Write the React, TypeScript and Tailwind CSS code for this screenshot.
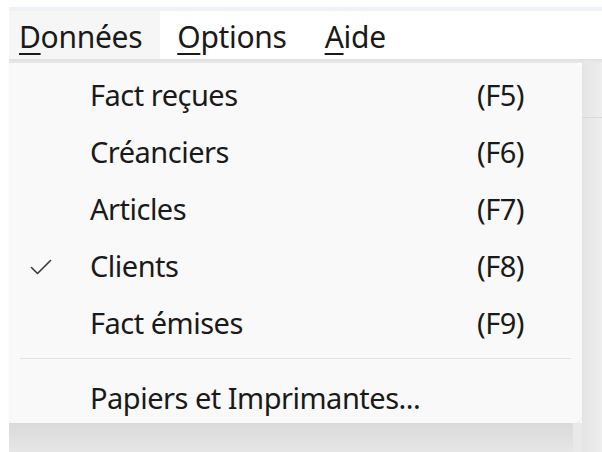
import type { ReactNode } from 'react';

type Entry = {
  label: string;
  key: string;
  checked?: boolean;
};

const entries: Entry[] = [
  { label: 'Fact reçues', key: '(F5)' },
  { label: 'Créanciers', key: '(F6)' },
  { label: 'Articles', key: '(F7)' },
  { label: 'Clients', key: '(F8)', checked: true },
  { label: 'Fact émises', key: '(F9)' },
];

const font = "font-['Noto_Sans','Segoe_UI',sans-serif]";

// access key letter, underlined like a native menu
const Accel = ({ children }: { children: ReactNode }) => (
  <span className="underline decoration-[1.5px] underline-offset-[5px]">{children}</span>
);

const Check = () => (
  <svg width="22" height="16" viewBox="0 0 22 16" fill="none">
    <path d="M1.5 8.5 L7.5 14.5 L20.5 1.5" stroke="#3a3a3a" strokeWidth="1.6" strokeLinecap="round" strokeLinejoin="round" />
  </svg>
);

const MenuRow = ({ entry }: { entry: Entry }) => (
  <div className="flex h-[57px] items-center">
    <div className="flex w-[81px] shrink-0 items-center pl-[21px] pt-[2px]">{entry.checked && <Check />}</div>
    <div className="w-[387px] shrink-0">{entry.label}</div>
    <div>{entry.key}</div>
  </div>
);

export default function App() {
  return (
    <div className={`flex h-[452px] w-[602px] flex-col overflow-hidden bg-white pl-[9px] pt-[7px] text-[#1a1a1a] ${font}`}>
      <div className="h-[4px] bg-[#eef2f8]" />

      {/* menu bar */}
      <nav className="flex h-[48px] items-stretch bg-white text-[30px] tracking-[-0.3px]">
        <div className="flex items-center bg-[#f6f6f6] pl-[10px] pr-[18px] pt-[3px]">
          <span>
            <Accel>D</Accel>onnées
          </span>
        </div>
        <div className="flex items-center pl-[17px] pr-[19px] pt-[3px]">
          <span>
            <Accel>O</Accel>ptions
          </span>
        </div>
        <div className="flex items-center px-[19px] pt-[3px]">
          <span>
            <Accel>A</Accel>ide
          </span>
        </div>
      </nav>

      <div className="h-[4px] bg-gradient-to-b from-[#e0e0e0] to-[#e9e9e9]" />

      <div className="flex flex-1">
        <div className="flex w-[573px] flex-col">
          {/* dropdown */}
          <div className="flex h-[360px] flex-col rounded-r-[8px] bg-[#f9f9f9] pt-[3px] text-[29px] tracking-[-0.5px] shadow-[1px_1px_2px_rgba(0,0,0,0.08)]">
            {entries.map((e) => (
              <MenuRow key={e.key} entry={e} />
            ))}
            <div className="px-[11px] pb-[13px] pt-[7px]">
              <div className="h-px bg-[#e2e2e2]" />
            </div>
            <div className="flex h-[50px] items-center pl-[81px] pt-[1px]">Papiers et Imprimantes...</div>
          </div>
          <div className="flex flex-1">
            <div className="w-[564px] bg-gradient-to-b from-[#dadada] to-[#e6e6e6]" />
            <div className="flex-1 bg-[#e9e9e9]" />
          </div>
        </div>

        {/* window behind the menu */}
        <div className="flex flex-1 flex-col bg-gradient-to-r from-[#e4e4e4] to-[#eeeeee]">
          <div className="h-[55px] border-b border-[#d8d8d8]" />
        </div>
      </div>
    </div>
  );
}
